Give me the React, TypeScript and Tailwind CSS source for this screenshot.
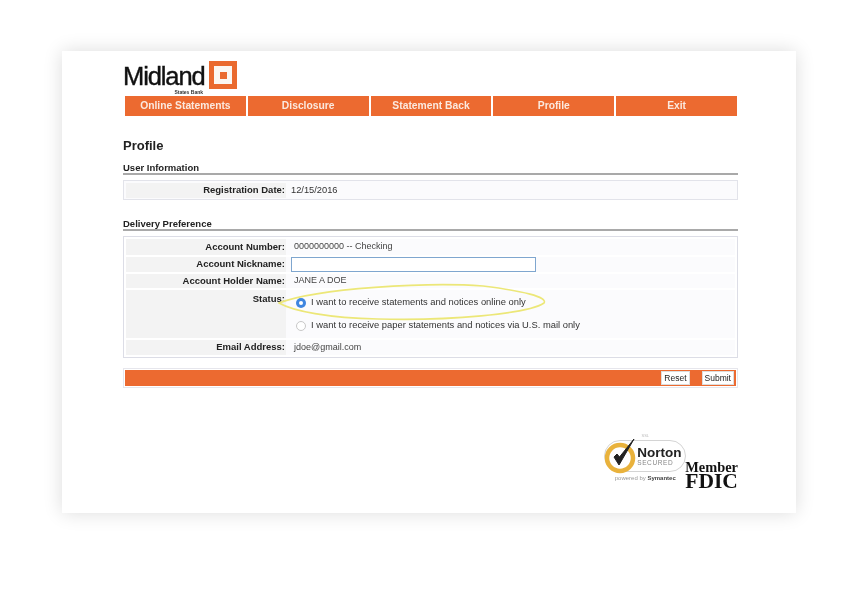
const sans = "font-['Liberation_Sans',Arial,sans-serif]";

const navItems = ["Online Statements", "Disclosure", "Statement Back", "Profile", "Exit"];

function Logo() {
  return (
    <div className="flex h-[35px] items-start">
      <div className="flex w-[86px] flex-col items-start">
        <span className="mt-[2px] block h-[26px] text-[25.5px] leading-[26px] font-normal tracking-[-1.1px] whitespace-nowrap text-[#111] [-webkit-text-stroke:0.4px_#111]">
          Midland
        </span>
        <span className="mr-[6px] block self-end text-[5px] leading-[6px] font-bold whitespace-nowrap text-[#333]">
          States Bank
        </span>
      </div>
      <div className="flex h-[28px] w-[28px] items-center justify-center bg-[#ea6a2f]">
        <div className="flex h-[18px] w-[18px] items-center justify-center bg-[#fbf7f2]">
          <div className="h-[7px] w-[7px] bg-[#ea6a2f]" />
        </div>
      </div>
    </div>
  );
}

function SectionTitle({ children }: { children: string }) {
  return (
    <div className="border-b-2 border-[#a9a9a9] text-[9.5px] leading-[11px] font-bold text-[#222]">{children}</div>
  );
}

function Row({
  label,
  height,
  children,
  top,
}: {
  label: string;
  height: string;
  children: React.ReactNode;
  top?: boolean;
}) {
  return (
    <div className={`flex ${height}`}>
      <div
        className={`flex w-[160px] shrink-0 justify-end bg-[#f3f3f3] pr-[1px] text-[9.5px] font-bold text-[#222] ${top ? "items-start pt-[2px]" : "items-center"}`}
      >
        {label}:
      </div>
      <div className="flex min-w-0 flex-1 items-center bg-[#fbfbfd] pl-[8px] text-[9px] text-[#444]">{children}</div>
    </div>
  );
}

function NortonBadge() {
  return (
    <div className="-mr-[2px] flex w-[84px] flex-col items-center">
      <span className="h-[8px] text-[4px] leading-[8px] text-[#bbb]">SSL</span>
      <div className="flex h-[32px] w-[82px] items-center rounded-full border border-[#d4d4d4] bg-white">
        <svg width="34" height="38" viewBox="0 0 34 38" className="-ml-[1px] -mt-[3px] shrink-0">
          <circle cx="16" cy="22" r="13" fill="none" stroke="#e9b23c" strokeWidth="4.5" />
          <path d="M10 21 L15 29 L30 3 L15.5 21 L13 18 Z" fill="#222" stroke="#222" strokeWidth="1" strokeLinejoin="round" />
        </svg>
        <div className="-ml-[1px] flex flex-col items-start">
          <span className="text-[13.5px] leading-[13px] font-bold text-[#222]">Norton</span>
          <span className="text-[6.5px] leading-[8px] tracking-[0.6px] text-[#888]">SECURED</span>
        </div>
      </div>
      <span className="mt-[2px] text-[6px] leading-[8px] text-[#999]">
        powered by <span className="font-bold text-[#444]">Symantec</span>
      </span>
    </div>
  );
}

export default function App() {
  return (
    <div className={`h-[597px] w-[857px] overflow-hidden bg-white pt-[51px] pl-[62px] ${sans}`}>
      <div className="relative h-[462px] w-[734px] bg-white pt-[10px] pl-[61px] shadow-[0_0_18px_rgba(0,0,0,0.14)] blur-[0.35px]">
        <Logo />

        <div className="ml-[2px] flex h-[20px] w-[612px] gap-[2px]">
          {navItems.map((item) => (
            <div
              key={item}
              className="flex flex-1 items-center justify-center bg-[#ec6a30] text-[10.3px] font-bold text-[#fbe9df]"
            >
              {item}
            </div>
          ))}
        </div>

        <div className="w-[615px]">
          <h1 className="mt-[22px] text-[13px] leading-[16px] font-bold text-[#222]">Profile</h1>

          <div className="mt-[8px]">
            <SectionTitle>User Information</SectionTitle>
          </div>
          <div className="mt-[5px] border border-[#e2e3ea] bg-[#fbfbfd] px-[2px] pt-[2px] pb-[1px]">
            <Row label="Registration Date" height="h-[15px]">
              <span className="-ml-[3px] text-[9.3px] text-[#333]">12/15/2016</span>
            </Row>
          </div>

          <div className="mt-[18px]">
            <SectionTitle>Delivery Preference</SectionTitle>
          </div>
          <div className="mt-[5px] flex flex-col gap-[2px] border border-[#dcdde6] bg-white p-[2px]">
            <Row label="Account Number" height="h-[16px]">
              0000000000 -- Checking
            </Row>
            <Row label="Account Nickname" height="h-[15px]">
              <div className="-ml-[3px] h-[15px] w-[245px] border border-[#7fa6cf] bg-white" />
            </Row>
            <Row label="Account Holder Name" height="h-[14px]">
              JANE A DOE
            </Row>
            <Row label="Status" height="h-[48px]" top>
              <div className="ml-[2px] flex flex-col gap-[11px]">
                <label className="flex h-[12px] items-center gap-[5px]">
                  <span className="flex h-[10px] w-[10px] items-center justify-center rounded-full bg-[#3f86e0]">
                    <span className="h-[4px] w-[4px] rounded-full bg-white" />
                  </span>
                  <span className="text-[9.4px] text-[#333]">I want to receive statements and notices online only</span>
                </label>
                <label className="flex h-[12px] items-center gap-[5px]">
                  <span className="h-[10px] w-[10px] rounded-full border border-[#c8c8c8] bg-white" />
                  <span className="text-[9.4px] text-[#333]">
                    I want to receive paper statements and notices via U.S. mail only
                  </span>
                </label>
              </div>
            </Row>
            <Row label="Email Address" height="h-[15px]">
              jdoe@gmail.com
            </Row>
          </div>

          <div className="mt-[10px] border border-[#e6e6ec] p-[1px]">
            <div className="flex h-[16px] items-center justify-end gap-[12px] bg-[#ec6a30] pr-[2px]">
              <button className="h-[14px] border border-[#ddd] bg-white px-[2px] text-[8.5px] leading-[12px] text-[#222]">
                Reset
              </button>
              <button className="h-[14px] border border-[#ddd] bg-white px-[2px] text-[8.5px] leading-[12px] text-[#222]">
                Submit
              </button>
            </div>
          </div>

          <div className="mt-[44px] flex items-start justify-end">
            <NortonBadge />
            <div className="mt-[28px] flex flex-col items-center font-['Liberation_Serif',serif] font-bold text-[#111]">
              <span className="text-[14.4px] leading-[14px]">Member</span>
              <span className="text-[21.5px] leading-[15px]">FDIC</span>
            </div>
          </div>
        </div>

        {/* hand drawn highlight round the online option */}
        <svg width="270" height="40" viewBox="0 0 270 40" className="absolute top-[232px] left-[216px]" fill="none">
          <path
            d="M1 20 C 40 5, 150 -1, 205 3 C 245 8, 270 14, 266 20 C 250 31, 170 38, 100 36 C 50 35, 15 28, 1 20 Z"
            stroke="#ece778"
            strokeWidth="1.6"
          />
        </svg>
      </div>
    </div>
  );
}
